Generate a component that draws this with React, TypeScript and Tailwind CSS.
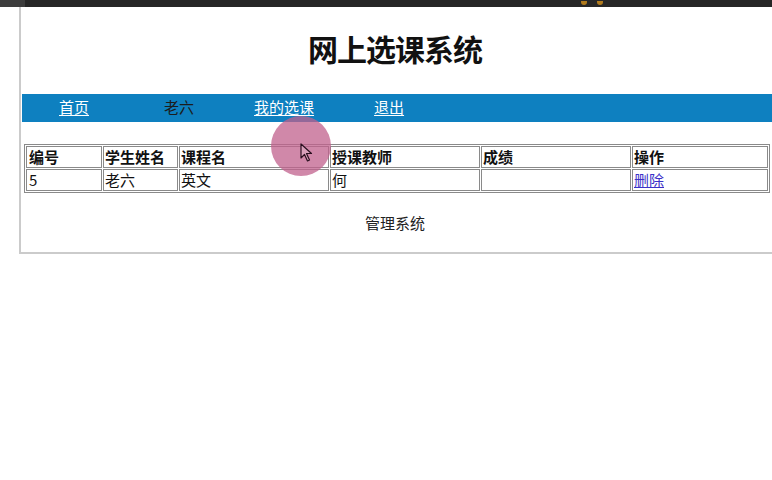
const font = { fontFamily: '"Noto Sans CJK SC", "Liberation Sans", sans-serif' };

const rows = [{ id: "5", student: "老六", course: "英文", teacher: "何", score: "" }];

export default function App() {
  return (
    <div className="relative w-[772px] h-[480px] bg-white overflow-hidden text-[#111]" style={font}>
      {/* recorder top bar */}
      <div className="h-[7px] bg-[#262626] flex">
        <div className="w-[25px] h-full bg-[#3c3c3c]" />
        <div className="ml-[556px] mt-[1px] flex gap-[10px]">
          <div className="w-[6px] h-[4px] rounded-b-full bg-[#b07a1c]" />
          <div className="w-[6px] h-[4px] rounded-b-full bg-[#b07a1c]" />
        </div>
      </div>

      <div className="ml-[19px] h-[247px] border-l-2 border-b-2 border-[#cbcbcb] pl-px flex flex-col">
        <div className="h-[87px] flex items-center justify-center">
          <h1 className="text-[30px] font-bold leading-none tracking-[-1px] mt-[-5px] ml-[-4px]">网上选课系统</h1>
        </div>

        <nav className="h-[28px] bg-[#0e80c0] flex items-center pb-[4px] text-[15px] leading-none">
          <a href="#" className="ml-[37px] text-white underline underline-offset-2">首页</a>
          <span className="ml-[75px] text-[#1c1c1c]">老六</span>
          <a href="#" className="ml-[60px] text-white underline underline-offset-2">我的选课</a>
          <a href="#" className="ml-[60px] text-white underline underline-offset-2">退出</a>
        </nav>

        <table className="mt-[22px] ml-[2px] w-[744px] table-fixed border-separate border-spacing-px border border-[#8a8a8a] text-[15px] leading-[20px]">
          <thead>
            <tr>
              <th className="w-[76px] border border-[#8a8a8a] px-[2px] text-left font-bold">编号</th>
              <th className="w-[75px] border border-[#8a8a8a] px-px text-left font-bold">学生姓名</th>
              <th className="w-[150px] border border-[#8a8a8a] px-px text-left font-bold">课程名</th>
              <th className="w-[150px] border border-[#8a8a8a] px-px text-left font-bold">授课教师</th>
              <th className="w-[150px] border border-[#8a8a8a] px-px text-left font-bold">成绩</th>
              <th className="w-[136px] border border-[#8a8a8a] px-px text-left font-bold">操作</th>
            </tr>
          </thead>
          <tbody>
            {rows.map((r) => (
              <tr key={r.id}>
                <td className="border border-[#8a8a8a] px-[2px]">{r.id}</td>
                <td className="border border-[#8a8a8a] px-px">{r.student}</td>
                <td className="border border-[#8a8a8a] px-px">{r.course}</td>
                <td className="border border-[#8a8a8a] px-px">{r.teacher}</td>
                <td className="border border-[#8a8a8a] px-px">{r.score}</td>
                <td className="border border-[#8a8a8a] px-px">
                  <a href="#" className="text-[#3b31c8] underline">删除</a>
                </td>
              </tr>
            ))}
          </tbody>
        </table>

        <div className="mt-[20px] text-center text-[15px] leading-[20px] text-[#222] ml-[-4px]">管理系统</div>
      </div>

      {/* cursor highlight from the screen recording */}
      <div className="absolute left-[271px] top-[116px] w-[60px] h-[60px] rounded-full bg-[#c0608c] opacity-75 pointer-events-none" />
      <svg className="absolute left-[300px] top-[143px] pointer-events-none" width="14" height="20" viewBox="0 0 14 20">
        <path d="M1 1 L1 15 L4.5 11.5 L7.5 18 L9.5 17 L6.5 10.5 L11.5 10.5 Z" fill="#d9a0bb" stroke="#2a1020" strokeWidth="1.2" strokeLinejoin="round" />
      </svg>
    </div>
  );
}
